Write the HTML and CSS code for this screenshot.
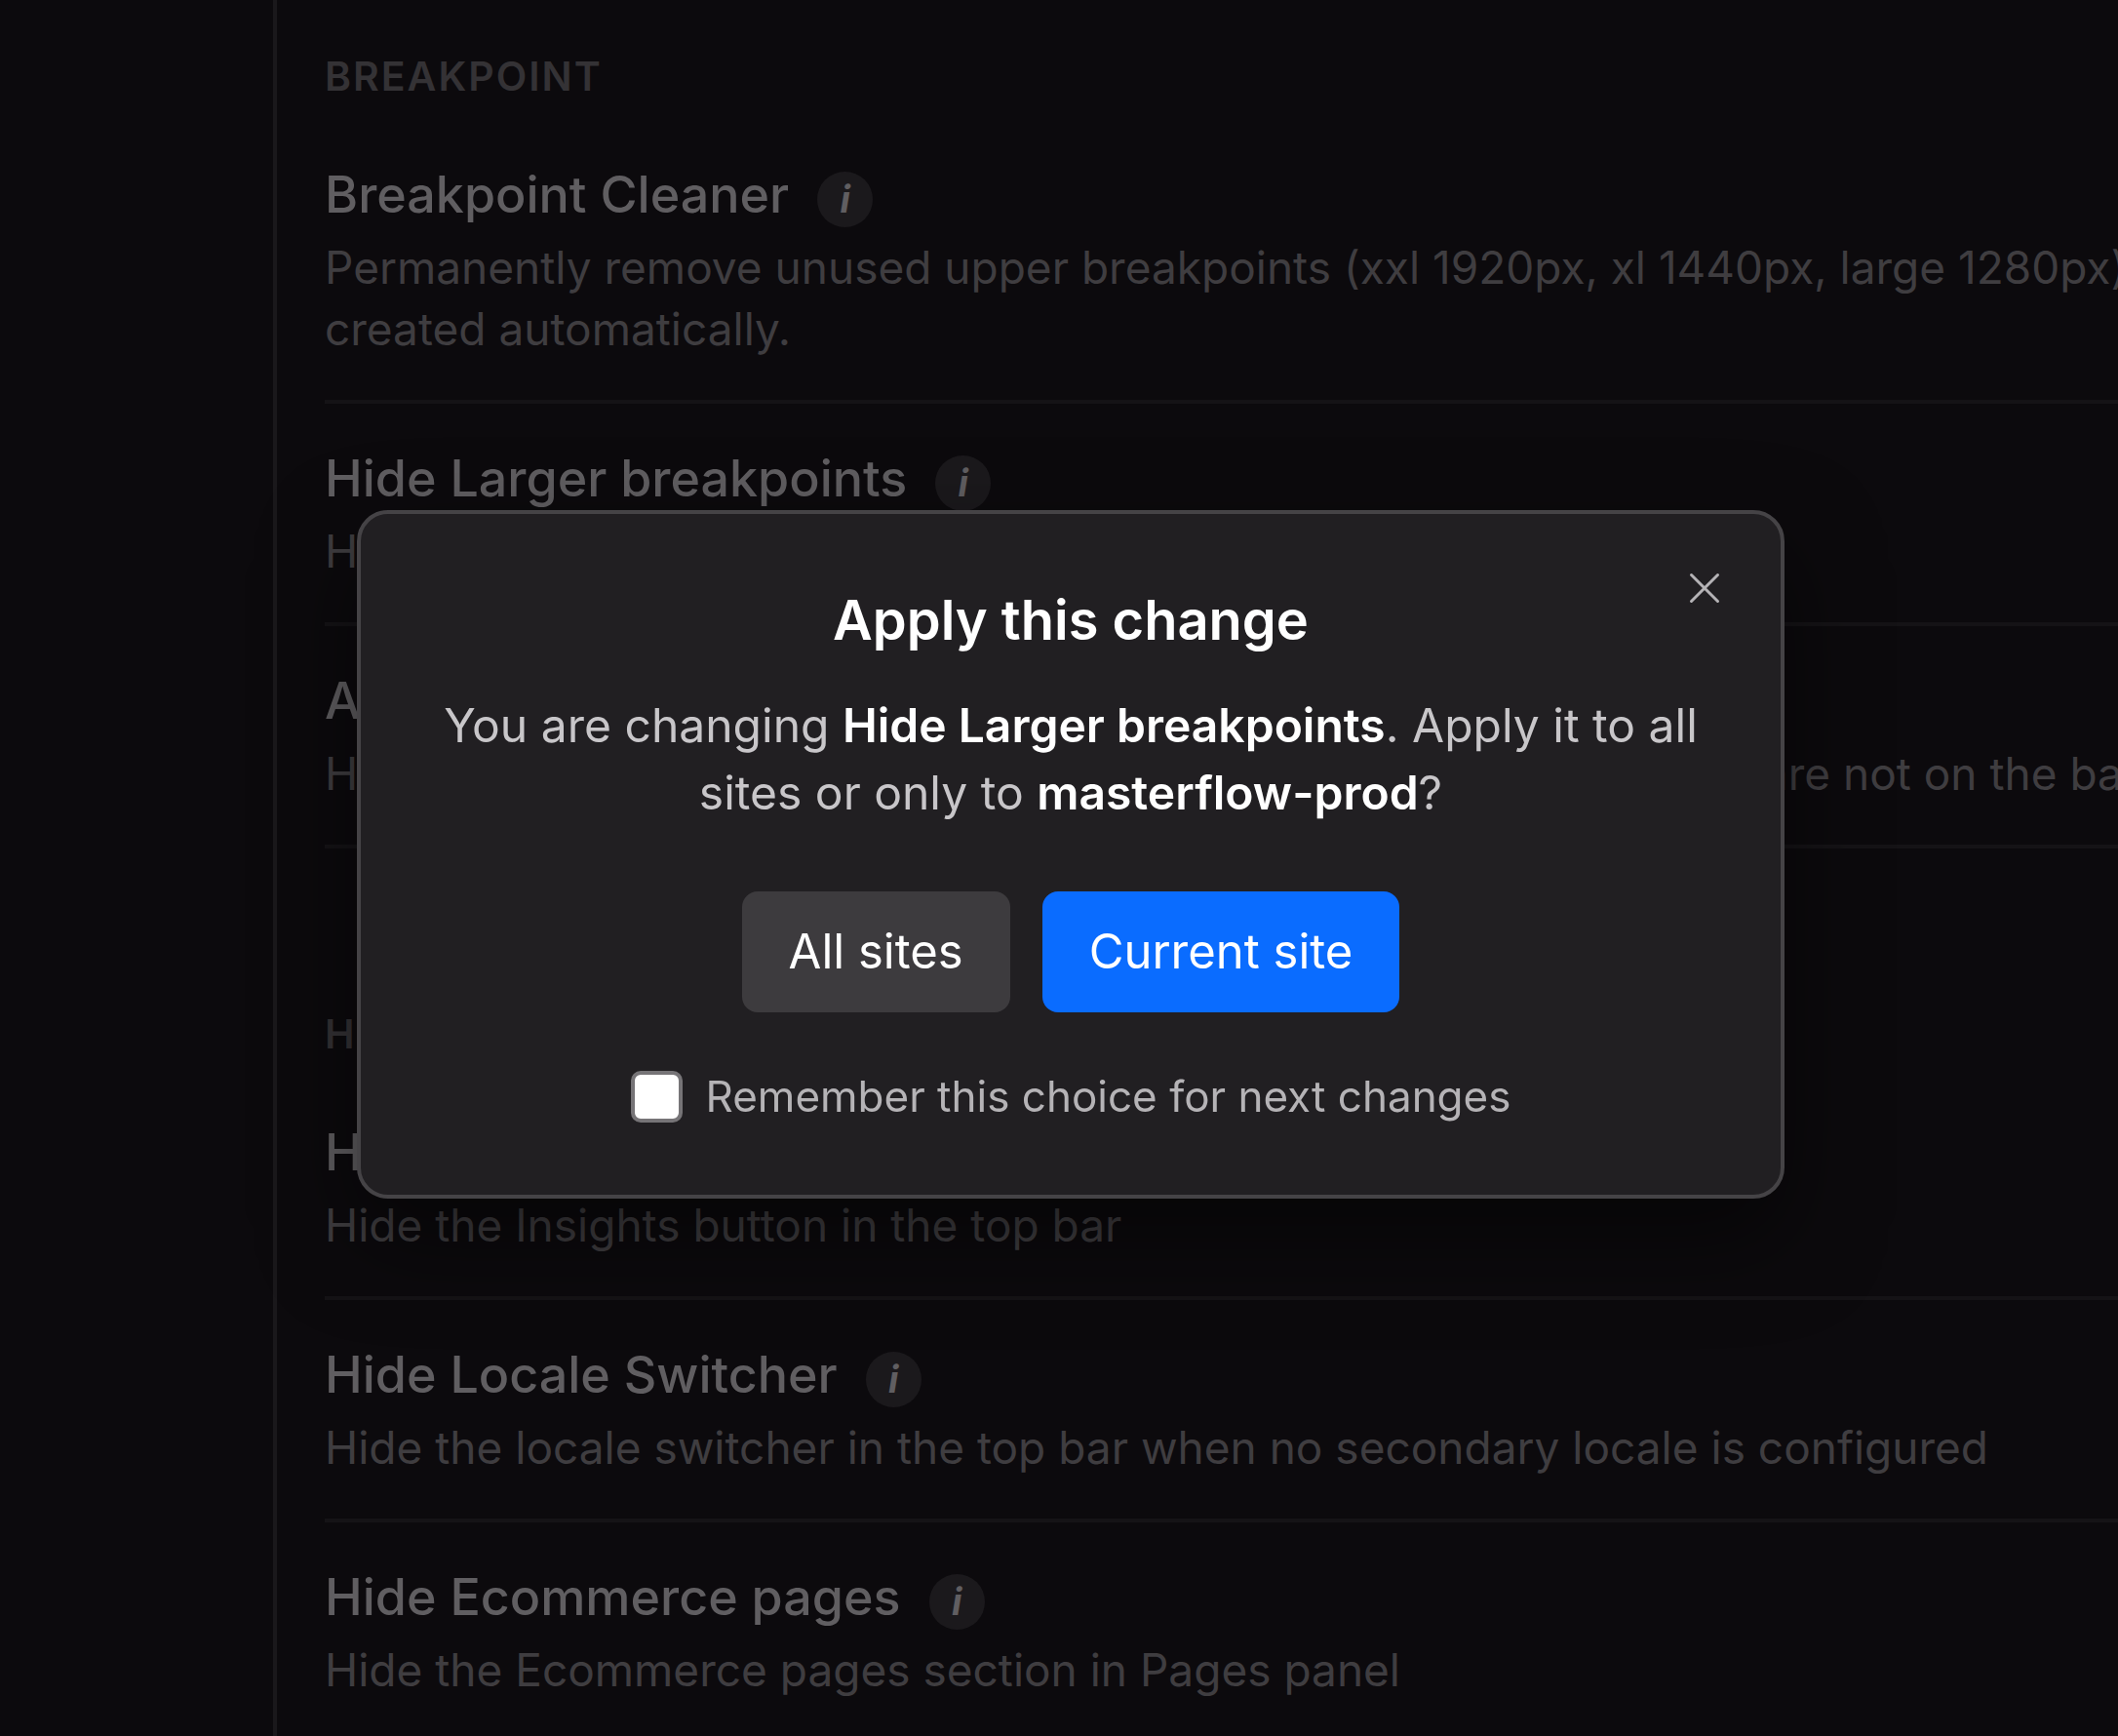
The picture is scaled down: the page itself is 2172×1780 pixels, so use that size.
FILE: index.html
```html
<!DOCTYPE html>
<html lang="en">
<head>
  <meta charset="UTF-8">
  <meta name="viewport" content="width=device-width, initial-scale=1">
  <title>Settings</title>
  <link rel="stylesheet" href="styles.css">
</head>

<body>

  <div class="layout">
    <aside class="sidebar"></aside>

    <main class="content">
      <section class="section">
        <h2 class="section-title">BREAKPOINT</h2>

        <div class="item">
          <div class="item-head">
            <h3>Breakpoint Cleaner</h3>
            <button class="info" type="button" aria-label="Info">i</button>
          </div>
          <p>Permanently remove unused upper breakpoints (xxl 1920px, xl 1440px, large 1280px) created automatically.</p>
        </div>

        <div class="item">
          <div class="item-head">
            <h3>Hide Larger breakpoints</h3>
            <button class="info" type="button" aria-label="Info">i</button>
          </div>
          <p>Hide unused larger breakpoints</p>
        </div>

        <div class="item">
          <div class="item-head">
            <h3>Active breakpoint alert</h3>
            <button class="info" type="button" aria-label="Info">i</button>
          </div>
          <p class="one-line">Highlight the current breakpoint button in the top bar each time you are not on the base</p>
        </div>
      </section>

      <section class="section">
        <h2 class="section-title">HIDE</h2>

        <div class="item">
          <div class="item-head">
            <h3>Hide Insights</h3>
            <button class="info" type="button" aria-label="Info">i</button>
          </div>
          <p>Hide the Insights button in the top bar</p>
        </div>

        <div class="item">
          <div class="item-head">
            <h3>Hide Locale Switcher</h3>
            <button class="info" type="button" aria-label="Info">i</button>
          </div>
          <p>Hide the locale switcher in the top bar when no secondary locale is configured</p>
        </div>

        <div class="item">
          <div class="item-head">
            <h3>Hide Ecommerce pages</h3>
            <button class="info" type="button" aria-label="Info">i</button>
          </div>
          <p>Hide the Ecommerce pages section in Pages panel</p>
        </div>
      </section>
    </main>
  </div>

  <div class="overlay">
    <div class="modal" role="dialog" aria-modal="true" aria-labelledby="modalTitle">
      <button class="close" type="button" aria-label="Close">
        <svg viewBox="0 0 32 32" width="32" height="32" fill="none" stroke="currentColor" stroke-width="3" stroke-linecap="round">
          <path d="M2.5 2.5 L29.5 29.5 M29.5 2.5 L2.5 29.5"/>
        </svg>
      </button>
      <h1 id="modalTitle">Apply this change</h1>
      <p class="message">You are changing <strong>Hide Larger breakpoints</strong>. Apply it to all sites or only to <strong>masterflow-prod</strong>?</p>
      <div class="actions">
        <button class="btn" type="button">All sites</button>
        <button class="btn primary" type="button">Current site</button>
      </div>
      <label class="remember" for="remember">
        <input type="checkbox" id="remember">
        Remember this choice for next changes
      </label>
    </div>
  </div>

</body>
</html>
```

FILE: styles.css
```css
:root {
  --bg-color: #0c0a0d;
  --line-color: #1a181b;
  --divider-color: #151316;
  --title-color: #605e61;
  --text-color: #3f3d40;
  --heading-color: #343235;
  --modal-bg: #211f22;
  --modal-border: #454346;
  --primary-color: #0a6cff;
}

* { margin: 0; padding: 0; box-sizing: border-box; }

body {
  font-family: Inter, sans-serif;
  background-color: var(--bg-color);
  height: 100vh;
  overflow: hidden;
}

button {
  border: none;
  font-family: inherit;
  cursor: pointer;
}

.layout {
  display: flex;
  min-height: 100vh;
}

.sidebar {
  flex: 0 0 284px;
  border-right: 4px solid var(--line-color);
}

.content {
  flex: 1;
  min-width: 0;
  padding: 54px 0 0 49px;
}

.section + .section {
  margin-top: 166px;
}

.section-title {
  margin-bottom: 21px;
  font-size: 41px;
  font-weight: 600;
  line-height: 48px;
  letter-spacing: 2px;
  color: var(--heading-color);
}

.item {
  padding: 53px 0 41px;
  border-bottom: 4px solid var(--divider-color);
}

.item-head {
  display: flex;
  align-items: flex-start;
  gap: 29px;
  margin-bottom: 10px;
}

.item h3 {
  font-size: 52px;
  font-weight: 500;
  line-height: 48px;
  color: var(--title-color);
}

/* descriptions run a little past the right edge */
.item p {
  margin-right: -16px;
  font-size: 46px;
  line-height: 63px;
  color: var(--text-color);
}

.item .one-line {
  white-space: nowrap;
}

.info {
  width: 57px;
  height: 57px;
  border-radius: 50%;
  background: #1b191c;
  color: var(--title-color);
  font-size: 38px;
  font-style: italic;
  font-weight: 700;
  line-height: 57px;
}

.overlay {
  position: fixed;
  inset: 0;
  display: flex;
  justify-content: center;
  align-items: center;
  padding: 0 0 28px 24px;
}

.modal {
  position: relative;
  width: 1464px;
  max-width: 100%;
  padding: 75px 80px 71px;
  background: var(--modal-bg);
  border: 4px solid var(--modal-border);
  border-radius: 32px;
  box-shadow: 0 40px 96px rgba(0, 0, 0, 0.5);
  text-align: center;
}

.modal h1 {
  font-size: 56px;
  font-weight: 600;
  line-height: 68px;
  color: #fff;
}

.close {
  position: absolute;
  top: 44px;
  right: 46px;
  display: flex;
  padding: 16px;
  background: none;
  color: #b5b3b6;
}

.message {
  margin-top: 39px;
  font-size: 48px;
  line-height: 69px;
  color: #c8c6c9;
}

.message strong {
  font-weight: 600;
  color: #fff;
}

.actions {
  display: flex;
  justify-content: center;
  gap: 33px;
  margin-top: 67px;
}

.btn {
  padding: 32px 48px;
  border-radius: 16px;
  background: #3d3b3e;
  color: #fff;
  font-size: 49px;
  line-height: 60px;
}

.btn.primary {
  background: var(--primary-color);
}

.remember {
  display: flex;
  justify-content: center;
  align-items: center;
  gap: 24px;
  margin-top: 56px;
  font-size: 44px;
  line-height: 60px;
  color: #b5b3b6;
}

.remember input {
  appearance: none;
  width: 53px;
  height: 53px;
  border: 4px solid #767477;
  border-radius: 10px;
  background: #fff;
}

.remember input:checked {
  background: var(--primary-color);
}
```
